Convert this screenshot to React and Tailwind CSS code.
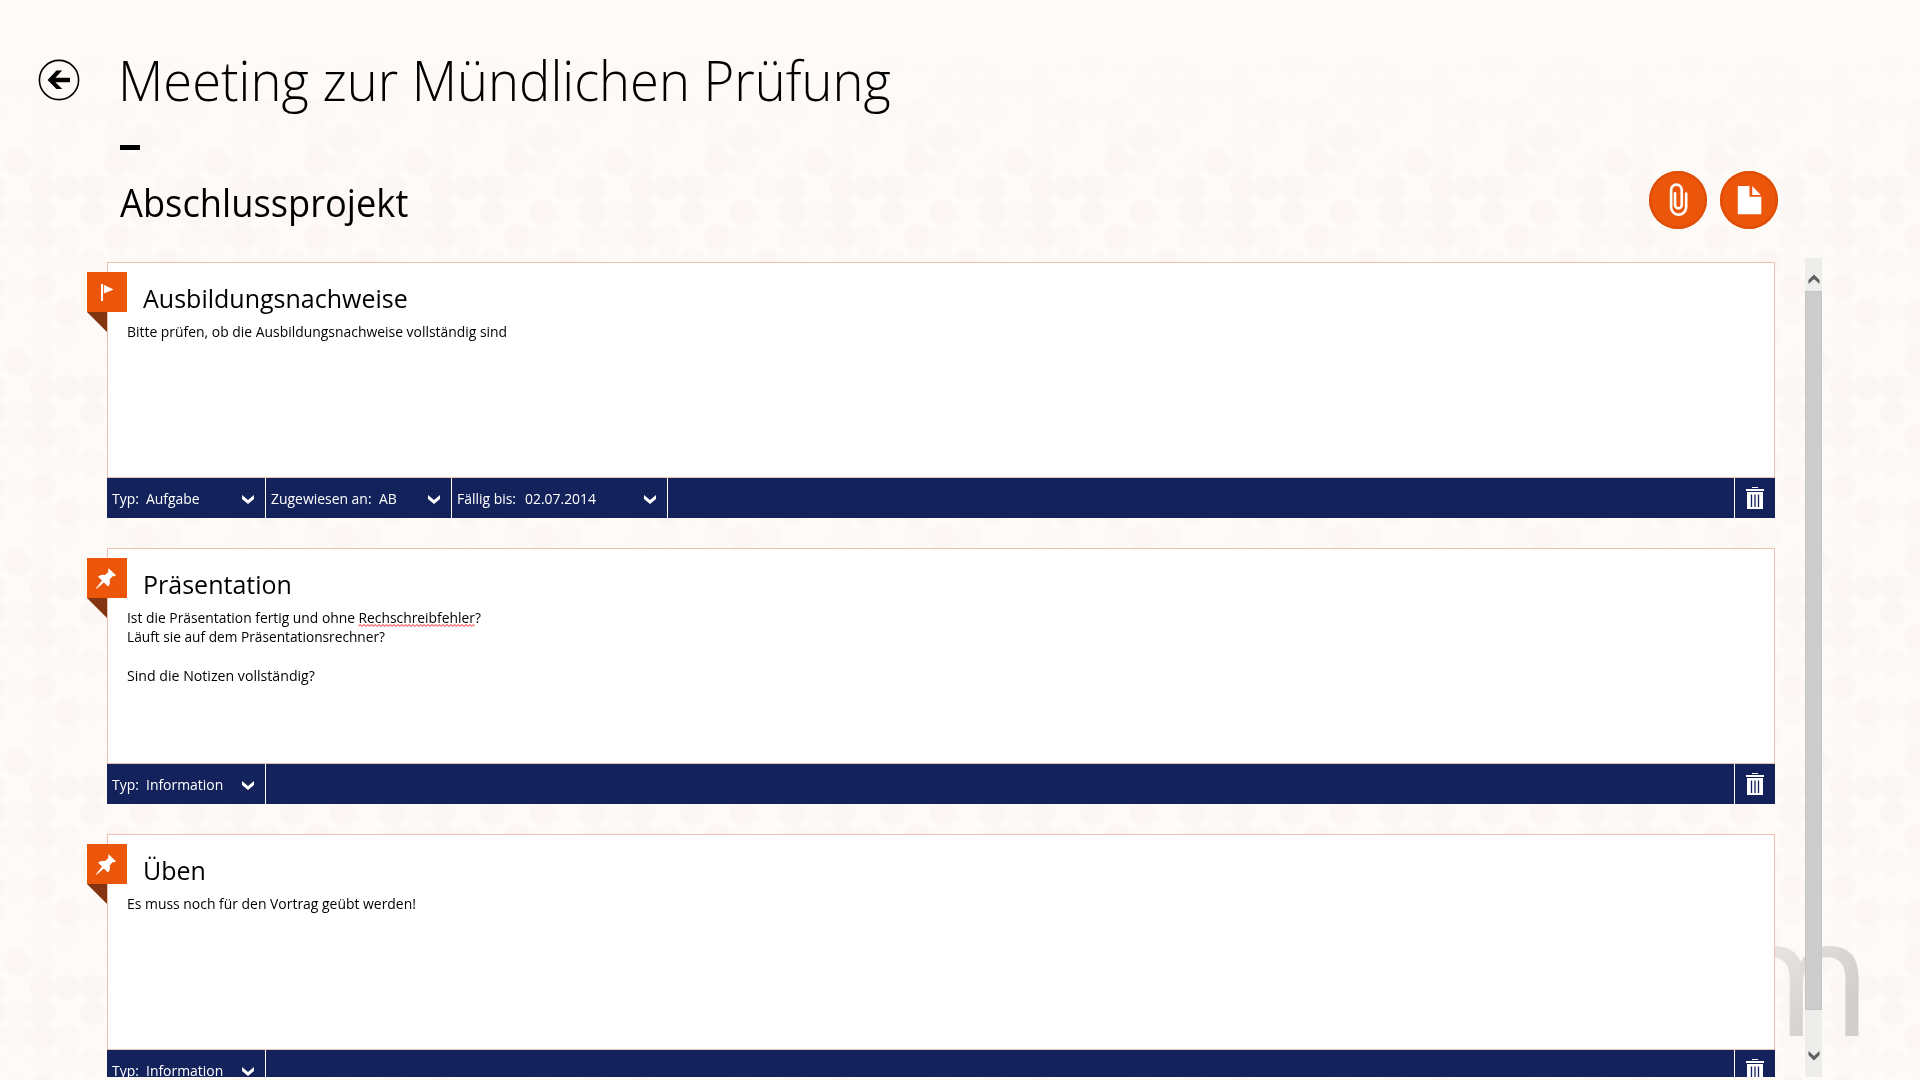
import React from 'react';

const SHADES = ['#fefaf7', '#fdf9f6', '#fcf8f5', '#fcf7f5', '#fbf7f4'];

const TILE = [
  [1, 1, 3, 1, 0, 1, 1, 2],
  [0, 2, 1, 3, 1, 3, 0, 0],
  [3, 0, 1, 2, 0, 1, 3, 1],
  [2, 3, 2, 0, 0, 1, 1, 0],
  [3, 2, 0, 1, 3, 2, 0, 0],
  [1, 0, 2, 4, 0, 3, 4, 4],
  [0, 3, 0, 4, 1, 4, 0, 4],
  [3, 1, 0, 2, 2, 3, 2, 0],
];

function Backdrop() {
  return (
    <svg className="absolute inset-0 size-full" aria-hidden="true">
      <defs>
        <pattern id="octagons" width="200" height="200" x="104.8" y="49.8" patternUnits="userSpaceOnUse">
          <rect width="200" height="200" fill="#fffbf8" />
          {TILE.map((row, y) =>
            row.map((shade, x) => (
              <path
                key={`${x}-${y}`}
                d="M6 0H19L25 6V19L19 25H6L0 19V6Z"
                transform={`translate(${x * 25} ${y * 25})`}
                fill={SHADES[shade]}
              />
            ))
          )}
        </pattern>
        <linearGradient id="fade" x1="0" y1="0" x2="0" y2="1">
          <stop offset="0" stopColor="#fefaf7" />
          <stop offset="0.3" stopColor="#fefaf7" />
          <stop offset="1" stopColor="#fefaf7" stopOpacity="0" />
        </linearGradient>
      </defs>
      <rect width="100%" height="100%" fill="url(#octagons)" />
      <rect width="100%" height="150" fill="url(#fade)" />
    </svg>
  );
}

function BackButton() {
  return (
    <svg className="size-[42px] shrink-0" viewBox="0 0 42 42" fill="none">
      <circle cx="21" cy="21" r="19.6" stroke="#000" strokeWidth="1.6" />
      <path d="M9.6 21 18.4 11.5H24.2L17.4 18.8H32V23.2H17.4L24.2 30H18.4Z" fill="#000" />
    </svg>
  );
}

function ClipIcon() {
  return (
    <svg className="size-[58px]" viewBox="0 0 59 59" fill="none" stroke="#fff" strokeWidth="2.7" strokeLinecap="round">
      <path d="M37.8 23V37.6a7.7 7.7 0 0 1-15.3 0V19.2a5.2 5.2 0 0 1 10.8 0V34.6a3.4 3.4 0 0 1-6.8 0V22.6" />
    </svg>
  );
}

function DocIcon() {
  return (
    <svg className="size-[58px]" viewBox="0 0 59 59" fill="#fff">
      <path d="M19 15.3H30V26.2H42V43.2a.9.9 0 0 1-.9.9H19a.9.9 0 0 1-.9-.9V16.2a.9.9 0 0 1 .9-.9Z" />
      <path d="M32.8 15.3 41.4 24.3H32.8Z" />
    </svg>
  );
}

function RoundButton({ children }) {
  return (
    <button className="flex size-[58px] items-center justify-center rounded-full bg-[#eb560b] shadow-[inset_0_0_0_2.5px_#e04f05]">
      {children}
    </button>
  );
}

function FlagIcon() {
  return (
    <svg className="size-10" viewBox="0 0 40 40" fill="#fff">
      <path d="M14 12h2v17h-2zM16.8 12.8 26.6 17.4 16.8 21.4Z" />
    </svg>
  );
}

function PinIcon() {
  return (
    <svg className="size-10" viewBox="0 0 40 40" fill="#fff">
      <path d="M21.5 10.3 29 17.3Q27.5 18.6 25.8 18L22.6 21.4Q23.8 25.4 21 28.4L16.9 24.5 9.6 30.8 9 30.2 15 22.6 11 18.8Q14 16 18 17L21.4 13.9Q20.8 11.8 21.5 10.3Z" />
    </svg>
  );
}

function TrashIcon() {
  return (
    <svg className="h-[22px] w-[18px]" viewBox="0 0 18 22" fill="none">
      <path d="M6 .5h6" stroke="#fff" />
      <path d="M0 2h18v2H0zM1 5h16v17H1z" fill="#fff" />
      <path d="M5.5 7.5V20M9 7.5V20M12.5 7.5V20" stroke="#13225b" strokeWidth="1.3" />
    </svg>
  );
}

function Chevron() {
  return (
    <svg className="mt-0.5 ml-auto h-[9px] w-3" viewBox="0 0 12 9" fill="#fff">
      <path d="M0 0 6 5 12 0V4L6 9 0 4Z" />
    </svg>
  );
}

function Misspelled({ children }) {
  return (
    <span className="relative inline-block">
      {children}
      <svg className="absolute bottom-0 left-0 h-[3px] w-full" aria-hidden="true">
        <defs>
          <pattern id="squiggle" width="4" height="3" patternUnits="userSpaceOnUse">
            <path d="M-.5 2.9 2 .5 4.5 2.9" fill="none" stroke="#f01818" strokeWidth="1" />
          </pattern>
        </defs>
        <rect width="100%" height="3" fill="url(#squiggle)" />
      </svg>
    </span>
  );
}

function Field({ label, value, width, labelWidth }) {
  return (
    <div className={`flex h-10 shrink-0 items-center border-r border-white pr-[11px] pl-[5px] text-[14.67px] ${width}`}>
      <span className={labelWidth}>
        <span className="inline-block origin-left scale-x-[0.95]">{label}</span>
      </span>
      <span className="inline-block origin-left scale-x-[0.95]">{value}</span>
      <Chevron />
    </div>
  );
}

function Line({ children, fit }) {
  return (
    <p className="h-[19.4px]">
      <span className={`inline-block origin-left ${fit}`}>{children}</span>
    </p>
  );
}

function Card({ icon, title, children, fields }) {
  return (
    <section className="relative h-64 w-[1668px] shrink-0">
      <div className="h-[216px] border border-[#edbfae] bg-white pt-[16px]">
        <h3 className="ml-[35px] h-[38px] origin-left scale-x-[0.962] text-[26px] leading-[38px]">{title}</h3>
        <div className="mt-[5px] ml-[19px] text-[14.67px] leading-[19.4px]">{children}</div>
      </div>
      <div className="flex h-10 bg-[#13225b] text-white">
        {fields}
        <div className="ml-auto flex h-10 w-[41px] items-center justify-center border-l border-white">
          <TrashIcon />
        </div>
      </div>
      <div className="absolute top-2.5 -left-5">
        <div className="size-10 bg-[#eb560b]">{icon}</div>
        <svg className="size-5" viewBox="0 0 20 20" fill="#833512">
          <path d="M0 0H20V20Z" />
        </svg>
      </div>
    </section>
  );
}

const typeField = (value) => (
  <Field label="Typ:" value={value} width="w-[159px]" labelWidth="w-[34px]" />
);

export default function App() {
  return (
    <div className="relative h-[1080px] w-[1920px] overflow-hidden bg-[#fefaf7] font-['Open_Sans','Noto_Sans',sans-serif] whitespace-nowrap text-black">
      <Backdrop />
      <span className="absolute top-[883px] left-[1720px] bg-linear-to-br from-[#e5e2df] from-40% to-[#d2cecb] to-75% bg-clip-text text-[164px] leading-[180px] text-transparent">
        m
      </span>

      <div className="relative flex h-full flex-col">
        <header className="flex h-[140px] items-center pl-[38px]">
          <div className="mt-[20px]">
            <BackButton />
          </div>
          <h1 className="mt-[19px] ml-[38px] origin-left scale-x-[0.955] text-[55px] leading-[76px] font-light">
            Meeting zur Mündlichen Prüfung
          </h1>
        </header>
        <div className="mt-[5px] ml-[120px] h-[5px] w-5 bg-black" />

        <div className="mt-[21px] flex h-[61px] justify-between pr-[142px] pl-[120px]">
          <h2 className="origin-left scale-x-[0.93] pt-[3px] text-[39px] leading-[56px]">Abschlussprojekt</h2>
          <div className="flex gap-[13px]">
            <RoundButton>
              <ClipIcon />
            </RoundButton>
            <RoundButton>
              <DocIcon />
            </RoundButton>
          </div>
        </div>

        <main className="mt-[26px] flex h-[819px] overflow-hidden">
          <div className="flex w-[1775px] flex-col gap-[30px] pt-1 pl-[107px]">
            <Card
              icon={<FlagIcon />}
              title="Ausbildungsnachweise"
              fields={
                <>
                  {typeField('Aufgabe')}
                  <Field label="Zugewiesen an:" value="AB" width="w-[186px]" labelWidth="w-[108px]" />
                  <Field label="Fällig bis:" value="02.07.2014" width="w-[216px]" labelWidth="w-[68px]" />
                </>
              }
            >
              <Line fit="scale-x-[0.949]">Bitte prüfen, ob die Ausbildungsnachweise vollständig sind</Line>
            </Card>
            <Card icon={<PinIcon />} title="Präsentation" fields={typeField('Information')}>
              <Line fit="scale-x-[0.944]">
                Ist die Präsentation fertig und ohne <Misspelled>Rechschreibfehler</Misspelled>?
              </Line>
              <Line fit="scale-x-[0.935]">Läuft sie auf dem Präsentationsrechner?</Line>
              <Line fit="scale-x-100"> </Line>
              <Line fit="scale-x-[0.965]">Sind die Notizen vollständig?</Line>
            </Card>
            <Card icon={<PinIcon />} title="Üben" fields={typeField('Information')}>
              <Line fit="scale-x-[0.95]">Es muss noch für den Vortrag geübt werden!</Line>
            </Card>
          </div>

          <div className="ml-[30px] flex w-[17px] flex-col items-center bg-[#ededeb]">
            <svg className="mt-4 h-[10px] w-3 shrink-0" viewBox="0 0 12 10" fill="#5f5f5f">
              <path d="M.5 6 6 .5 11.5 6V10L6 5 .5 10Z" />
            </svg>
            <div className="mt-[7px] h-[719px] w-full border border-[#c4c4c4] bg-[#cdcdcd]" />
            <svg className="mt-[41px] h-[10px] w-3 shrink-0" viewBox="0 0 12 10" fill="#5f5f5f">
              <path d="M.5 4 6 9.5 11.5 4V0L6 5 .5 0Z" />
            </svg>
          </div>
        </main>
      </div>
    </div>
  );
}
